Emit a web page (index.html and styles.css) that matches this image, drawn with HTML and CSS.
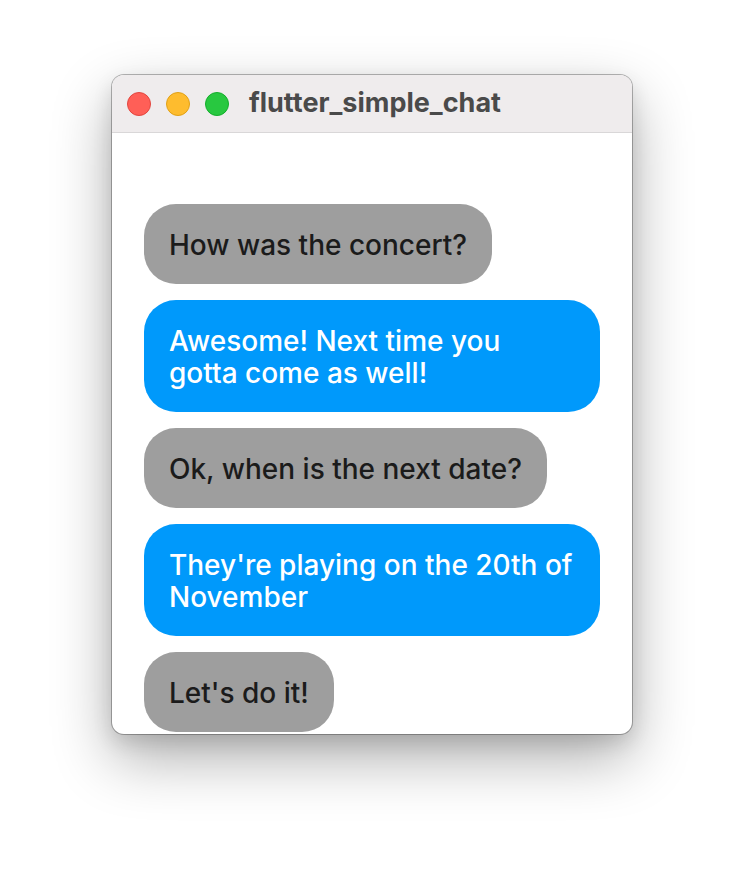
FILE: index.html
```html
<!DOCTYPE html>
<html>
<head>
<meta charset="utf-8">
<link rel="stylesheet" href="styles.css">
</head>
<body>
<div class="window">
  <div class="titlebar">
    <div class="lights">
      <span class="light red"></span>
      <span class="light yellow"></span>
      <span class="light green"></span>
    </div>
    <div class="title">flutter_simple_chat</div>
  </div>
  <div class="content">
    <div class="bubble gray">How was the concert?</div>
    <div class="bubble blue">Awesome! Next time you gotta come as well!</div>
    <div class="bubble gray">Ok, when is the next date?</div>
    <div class="bubble blue">They're playing on the 20th of November</div>
    <div class="bubble gray">Let's do it!</div>
  </div>
</div>
</body>
</html>
```

FILE: styles.css
```css
html, body {
  margin: 0;
  padding: 0;
  background: #ffffff;
}
body {
  width: 744px;
  height: 882px;
  overflow: hidden;
  font-family: Inter, "Noto Sans", sans-serif;
}
.window {
  margin: 75px 0 0 112px;
  width: 520px;
  height: 659px;
  border-radius: 12px;
  overflow: hidden;
  background: #ffffff;
  box-shadow: 0 0 0 1px rgba(0,0,0,0.28), 0 24px 60px rgba(0,0,0,0.32), 0 8px 20px rgba(0,0,0,0.12);
  display: flex;
  flex-direction: column;
}
.titlebar {
  height: 58px;
  flex: none;
  background: #efeced;
  border-bottom: 1px solid #d9d7d8;
  display: flex;
  align-items: center;
  padding-left: 15px;
  box-sizing: border-box;
}
.lights {
  display: flex;
  gap: 15px;
}
.light {
  width: 24px;
  height: 24px;
  border-radius: 50%;
  box-sizing: border-box;
}
.red { background: #ff5f57; border: 1px solid #e2463f; }
.yellow { background: #febc2e; border: 1px solid #e1a116; }
.green { background: #28c840; border: 1px solid #14ae2c; }
.title {
  margin-left: 20px;
  font-size: 27px;
  font-weight: 700;
  color: #4a4a4a;
  margin-top: -2px;
}
.content {
  flex: 1;
  overflow: hidden;
  padding: 71px 32px 0 32px;
  display: flex;
  flex-direction: column;
  align-items: flex-start;
  gap: 16px;
}
.bubble {
  flex: none;
  max-width: 456px;
  box-sizing: border-box;
  padding: 25px 25px 23px 25px;
  border-radius: 32px;
  font-size: 28px;
  line-height: 32px;
  font-weight: 500;
}
.gray {
  background: #9e9e9e;
  color: #1b1b1b;
}
.blue {
  background: #0099fb;
  color: #ffffff;
  width: 456px;
}
```
